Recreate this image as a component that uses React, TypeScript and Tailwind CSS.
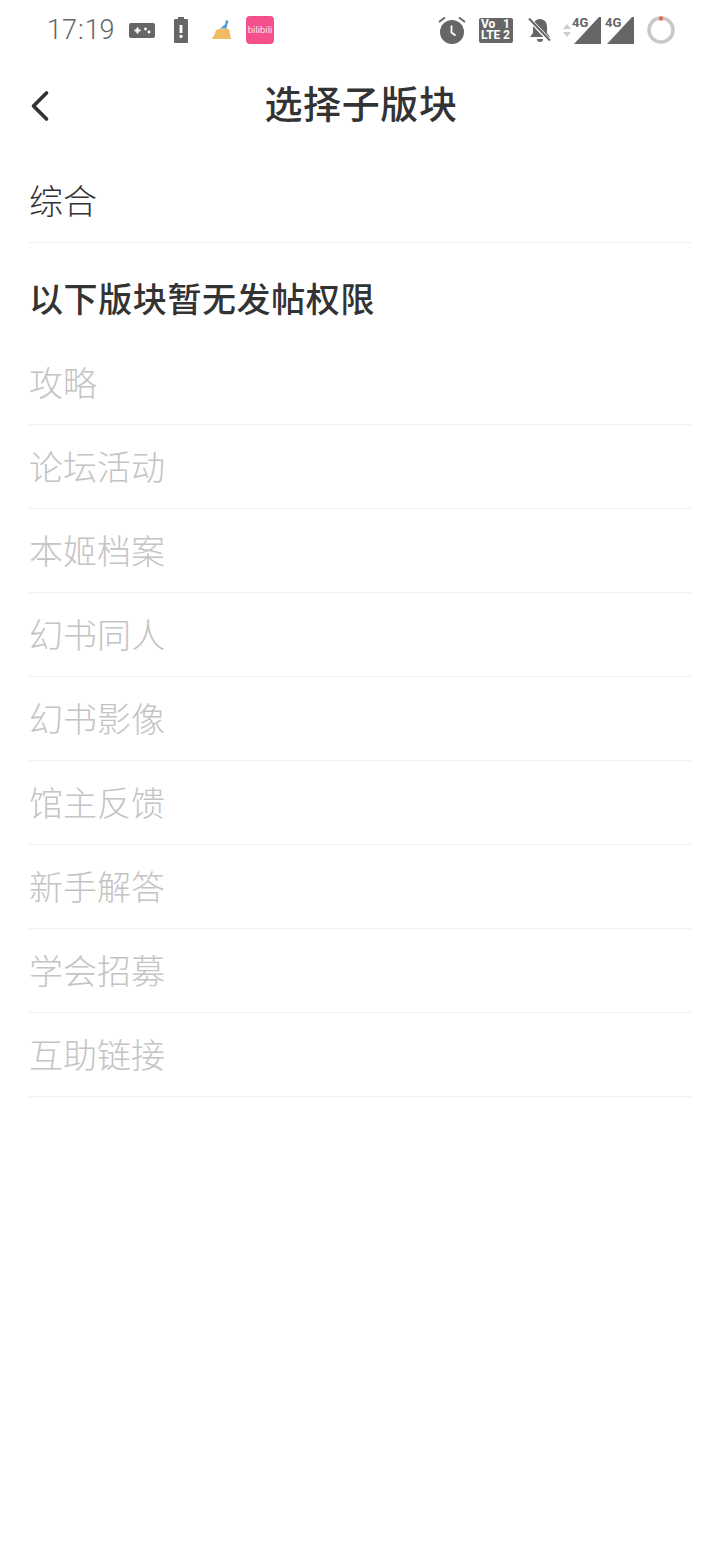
import React from 'react';
import { ChevronLeft } from 'lucide-react';

const lockedBoards = ['攻略', '论坛活动', '本姬档案', '幻书同人', '幻书影像', '馆主反馈', '新手解答', '学会招募', '互助链接'];

function StatusBar() {
    return (
        <div className="h-[60px] flex items-center justify-between pl-[47px] pr-[45px] text-[#666]">
            <div className="flex items-center">
                <span className="text-[27px] leading-none font-light font-['Roboto',sans-serif] w-[82px]">
                    17<span className="mx-[1px]">:</span>19
                </span>
                {/* 手柄 */}
                <svg width="26" height="16" viewBox="0 0 26 16">
                    <rect x="0" y="1" width="26" height="15" rx="2" fill="#666" />
                    <path d="M5.5 8.5h6M8.5 5.5v6" stroke="#fff" strokeWidth="2" />
                    <circle cx="16.5" cy="7" r="1.4" fill="#fff" />
                    <circle cx="20" cy="10" r="1.4" fill="#fff" />
                </svg>
                {/* 电池 */}
                <svg width="14" height="26" viewBox="0 0 14 26" className="ml-[19px]">
                    <path d="M4 0h6v2h3a1 1 0 0 1 1 1v22a1 1 0 0 1-1 1H1a1 1 0 0 1-1-1V3a1 1 0 0 1 1-1h3z" fill="#666" />
                    <rect x="5.6" y="8" width="2.8" height="8" fill="#fff" />
                    <rect x="5.6" y="18" width="2.8" height="2.8" fill="#fff" />
                </svg>
                {/* 清理 */}
                <svg width="20" height="20" viewBox="0 0 20 20" className="ml-[23px]">
                    <path d="M5 10c3-1.5 9-1.5 13-1l2 10H0c3-2 4-5 5-9z" fill="#f1bc62" />
                    <path d="M9 8.5l5-4 1-4.5 2.5 1-1.5 4.5-.5 3z" fill="#4a9bd8" />
                </svg>
                <div className="ml-[15px] w-[28px] h-[28px] rounded-[4px] bg-[#f4508c] flex items-center justify-center text-[#fde3ec] text-[9.5px] leading-none font-['Roboto',sans-serif]">
                    bilibili
                </div>
            </div>
            <div className="flex items-center">
                {/* 闹钟 */}
                <svg width="28" height="28" viewBox="0 0 28 28">
                    <circle cx="14" cy="16" r="12" fill="#666" />
                    <path d="M1 6l6-4.5M27 6l-6-4.5" stroke="#666" strokeWidth="2" />
                    <path d="M13.5 9.5v7l4 3" stroke="#fff" strokeWidth="1.8" fill="none" />
                </svg>
                <div className="ml-[13px] w-[34px] h-[25px] rounded-[2px] bg-[#666] text-white text-[12px] font-bold leading-[11.5px] font-['Roboto',sans-serif] flex flex-col justify-center pl-[2px]">
                    <span className="flex justify-between pr-[3px]"><span>Vo</span><span>1</span></span>
                    <span className="flex justify-between pr-[3px]"><span>LTE</span><span>2</span></span>
                </div>
                {/* 静音 */}
                <svg width="24" height="26" viewBox="0 0 24 26" className="ml-[15px]">
                    <path d="M12 2a7 7 0 0 1 7 7v7l3 4H2l3-4V9a7 7 0 0 1 7-7z" fill="#666" />
                    <path d="M9 22h6a3 3 0 0 1-6 0z" fill="#666" />
                    <path d="M1 2l21 22" stroke="#fff" strokeWidth="4" />
                    <path d="M1 1.5l21 22" stroke="#666" strokeWidth="2" />
                </svg>
                {/* 信号 1 */}
                <div className="ml-[11px] flex flex-col gap-[3px]">
                    <div className="w-0 h-0 border-x-[4px] border-x-transparent border-b-[5px] border-b-[#ccc]" />
                    <div className="w-0 h-0 border-x-[4px] border-x-transparent border-t-[5px] border-t-[#ccc]" />
                </div>
                <div className="relative w-[27px] h-[27px] ml-[3px]">
                    <svg width="27" height="27" viewBox="0 0 27 27"><path d="M0 27L25 0a1 1 0 0 1 2 1v26z" fill="#666" /></svg>
                    <span className="absolute -left-[2px] -top-[1px] text-[13px] font-bold leading-none font-['Roboto',sans-serif]">4G</span>
                </div>
                <div className="relative w-[27px] h-[27px] ml-[6px]">
                    <svg width="27" height="27" viewBox="0 0 27 27"><path d="M0 27L25 0a1 1 0 0 1 2 1v26z" fill="#666" /></svg>
                    <span className="absolute -left-[2px] -top-[1px] text-[13px] font-bold leading-none font-['Roboto',sans-serif]">4G</span>
                </div>
                {/* 电量圈 */}
                <svg width="28" height="28" viewBox="0 0 28 28" className="ml-[13px]">
                    <circle cx="14" cy="14" r="12" fill="none" stroke="#c8c8c8" strokeWidth="3.5" />
                    <path d="M14 0.5v4" stroke="#e8604c" strokeWidth="3.5" />
                </svg>
            </div>
        </div>
    );
}

export default function App() {
    return (
        <div className="w-[720px] h-[1560px] bg-white overflow-hidden font-['Noto_Sans_CJK_SC',sans-serif] text-[#333]">
            <StatusBar />

            {/* 标题栏 */}
            <div className="relative h-[90px] flex items-center justify-center">
                <ChevronLeft className="absolute left-[14px] top-[20px] text-[#333]" size={52} strokeWidth={1.7} />
                <span className="text-[38px] leading-none font-medium tracking-[0.6px] -mt-[7px] ml-[2px]">选择子版块</span>
            </div>

            <div className="px-[29px] pt-[8px]">
                <div className="h-[85px] flex items-center text-[34px] font-light border-b border-[#f0f0f0]">
                    <span className="-mt-[2px]">综合</span>
                </div>

                <div className="h-[98px] flex items-center text-[34px] font-medium tracking-[0.6px]">
                    <span className="mt-[10px]">以下版块暂无发帖权限</span>
                </div>

                {lockedBoards.map((name) => (
                    <div key={name} className="h-[84px] flex items-center text-[34px] font-light text-[#c4c4c4] border-b border-[#f0f0f0]">
                        <span className="-mt-[2px]">{name}</span>
                    </div>
                ))}
            </div>
        </div>
    );
}
